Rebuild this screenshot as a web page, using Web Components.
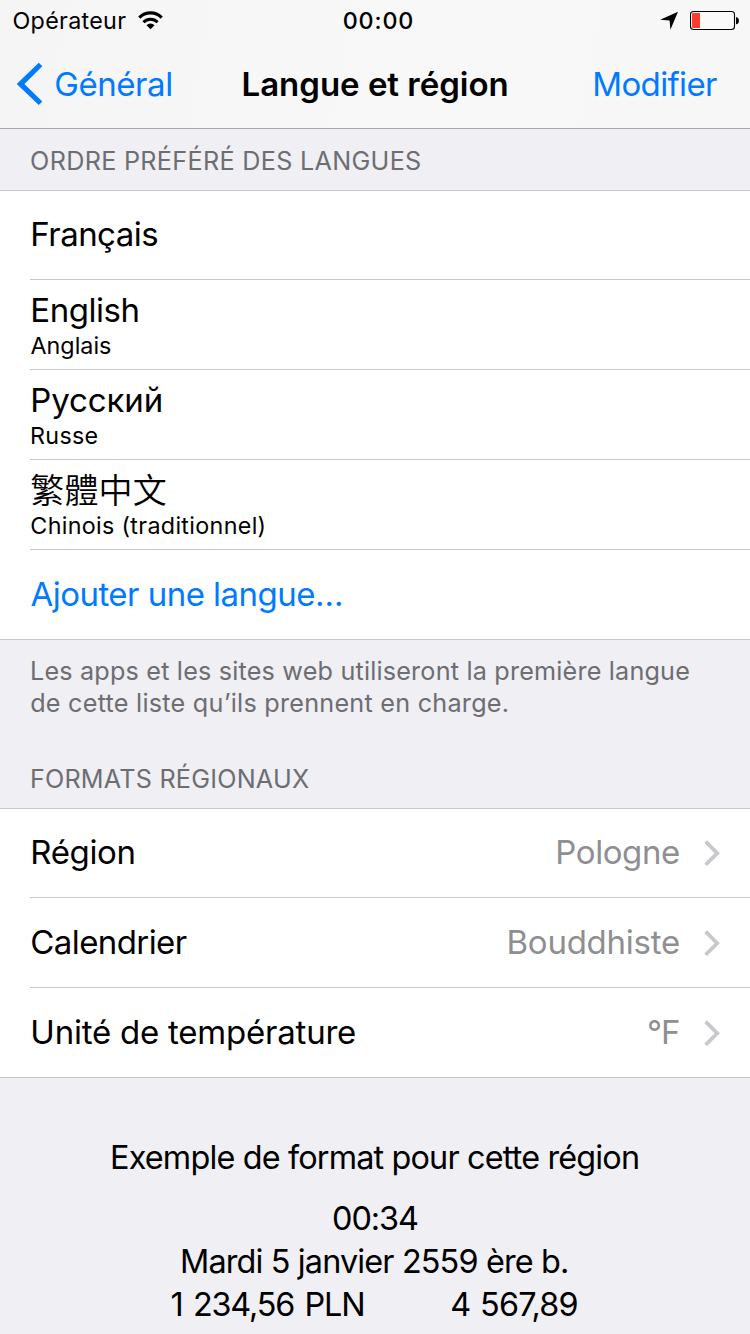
<!DOCTYPE html>
<html lang="fr">
<head>
<meta charset="utf-8">
<title>Langue et région</title>
<style>
  html, body { margin: 0; padding: 0; }
  body { background: #efeff4; font-family: Inter, "Noto Sans CJK TC", sans-serif; color: #000; overflow: hidden; }
</style>
</head>
<body>
<settings-screen></settings-screen>

<template id="t-label">
  <style>
    :host { display: block; flex: none; white-space: nowrap; font-size: 33px; line-height: 40px; height: 40px; }
    :host([kind="sub"]) { font-size: 23.3px; line-height: 31px; height: 31px; }
    :host([kind="note"]) { font-size: 25.2px; line-height: 32px; height: 32px; color: #6d6d72; }
    :host([strong]) { font-weight: 600; }
    :host([medium]) { font-weight: 500; }
    span { display: inline-block; vertical-align: top; height: 100%; }
  </style>
  <span><slot></slot></span>
</template>

<template id="t-status">
  <style>
    :host { display: grid; grid-template-columns: 1fr auto 1fr; height: 40px; padding: 0 11px 0 13px; box-sizing: border-box; }
    .side { display: flex; }
    .left { gap: 11.5px; }
    .right { justify-content: flex-end; gap: 12px; }
    label-text { margin-top: 5px; }
    .time { margin-left: 4px; }
    svg { display: block; }
  </style>
  <div class="side left">
    <label-text kind="sub" inset=".5" ink="112.7">Opérateur</label-text>
    <svg width="25" height="40" viewBox="138 0 25 40">
      <g fill="none" stroke="#000">
        <path stroke-width="3.2" d="M139.3 17.6A15.8 15.8 0 0 1 161.7 17.6"/>
        <path stroke-width="3" d="M143.4 22.2A10 10 0 0 1 157.6 22.2"/>
      </g>
      <path d="M146.5 25.2A5.6 5.6 0 0 1 154.5 25.2L150.5 29.2Z"/>
    </svg>
  </div>
  <label-text class="time" kind="sub" medium ink="68.6">00:00</label-text>
  <div class="side right">
    <svg width="18" height="40" viewBox="660 0 18 40"><path d="M678 11.8L670.4 29.8L669.6 20.4L660.2 19.8Z"/></svg>
    <svg width="49" height="40" viewBox="690 0 49 40">
      <rect x="690.5" y="11.5" width="44" height="18" rx="3" fill="#fff" fill-opacity=".4" stroke="#000" stroke-width="1.1"/>
      <path fill="#ff3b30" d="M693 13H700V28H693A1 1 0 0 1 692 27V14A1 1 0 0 1 693 13Z"/>
      <path d="M736 17A3.5 3.7 0 0 1 736 24.3Z"/>
    </svg>
  </div>
</template>

<template id="t-nav">
  <style>
    :host { display: grid; grid-template-columns: 1fr auto 1fr; height: 88px; padding: 0 33px 0 16px; box-sizing: border-box; }
    .back { display: flex; gap: 12.2px; }
    .back, .edit { color: #007aff; }
    .edit { display: flex; justify-content: flex-end; }
    label-text { margin-top: 24px; }
    .title { margin-left: 17px; }
    svg { display: block; fill: currentColor; }
  </style>
  <div class="back">
    <svg width="27" height="88" viewBox="16 40 27 88"><path d="M38.8 62.7L42.3 66.2L24.4 83.9L42.3 101.6L38.8 105.1L16.7 83.9Z"/></svg>
    <label-text ink="116">Général</label-text>
  </div>
  <label-text class="title" strong ink="263">Langue et région</label-text>
  <div class="edit"><label-text ink="122.7">Modifier</label-text></div>
</template>

<template id="t-group">
  <style>
    :host { display: block; background: #fff; border-bottom: 1px solid #c8c7cc; border-top: 1px solid #c8c7cc; }
  </style>
  <slot></slot>
</template>

<template id="t-row">
  <style>
    :host { display: block; padding-left: 30px; height: 90px; box-sizing: border-box; }
    :host(:first-child) { height: 89px; }
    :host(:last-child) { height: 89px; }
    .in { display: flex; justify-content: space-between; height: 100%; box-sizing: border-box; padding: 24px 30px 0 1.3px; border-bottom: 1px solid #c8c7cc; }
    :host(:first-child) .in { padding-top: 23px; }
    :host(:last-child) .in { border-bottom: 0; }
    :host([double]) .in { padding-top: 10px; }
    :host([action]) { color: #007aff; }
    .end { display: flex; gap: 25px; color: #8e8e93; }
    svg { display: none; margin-top: 8px; }
    :host([link]) svg { display: block; }
  </style>
  <div class="in">
    <div><slot></slot></div>
    <div class="end">
      <slot name="value"></slot>
      <svg width="16" height="26" viewBox="704 840 16 26"><path fill="#c7c7cc" d="M707 840.3L719.9 853.2L707 866L704.3 863.4L714.6 853.2L704.3 843Z"/></svg>
    </div>
  </div>
</template>

<template id="t-sample">
  <style>
    :host { display: flex; flex-direction: column; align-items: center; padding-top: 60px; }
    label-text { font-size: 32.4px; }
    .head { margin-bottom: 21px; }
    .line { margin-bottom: 3px; }
    .nums { display: flex; gap: 88px; margin-right: 1px; }
  </style>
  <label-text class="head" ink="525.8">Exemple de format pour cette région</label-text>
  <label-text class="line" inset="1" ink="85">00:34</label-text>
  <label-text class="line" inset="-1" ink="385">Mardi 5 janvier 2559 ère b.</label-text>
  <div class="nums">
    <label-text ink="191.8" word="2.5">1 234,56 PLN</label-text>
    <label-text ink="126.3" word="1.5">4 567,89</label-text>
  </div>
</template>

<template id="t-screen">
  <style>
    :host { display: block; width: 750px; height: 1334px; overflow: hidden; background: #efeff4; }
    header { background: linear-gradient(100deg, #f5f5f5, #f8f8f8 55%, #f7f7f8); border-bottom: 1px solid #a7a7ab; }
    .caption { padding: 16px 0 13px 31.1px; }
    .foot { padding: 15px 0 0 31.2px; }
    .second { padding-top: 44px; }
    .cjk { font-size: 34px; line-height: 42px; font-weight: 350; }
  </style>
  <header><status-bar></status-bar><nav-bar></nav-bar></header>
  <div class="caption"><label-text kind="note" ink="389">ORDRE PRÉFÉRÉ DES LANGUES</label-text></div>
  <list-group>
    <list-row><label-text inset="1" ink="124.9">Français</label-text></list-row>
    <list-row double><label-text inset="1" ink="105.2">English</label-text><label-text kind="sub" inset="-.8" ink="80.6">Anglais</label-text></list-row>
    <list-row double><label-text inset="1" ink="128.4">Русский</label-text><label-text kind="sub" inset=".8" ink="65.5">Russe</label-text></list-row>
    <list-row double><label-text class="cjk" lang="zh-Hant" ink="134.4">繁體中文</label-text><label-text kind="sub" ink="233.3">Chinois (traditionnel)</label-text></list-row>
    <list-row action><label-text inset="-.8" ink="310.4">Ajouter une langue…</label-text></list-row>
  </list-group>
  <div class="foot">
    <label-text kind="note" inset=".8" ink="657.2">Les apps et les sites web utiliseront la première langue</label-text>
    <label-text kind="note" ink="476.6">de cette liste qu’ils prennent en charge.</label-text>
  </div>
  <div class="caption second"><label-text kind="note" inset=".8" ink="277">FORMATS RÉGIONAUX</label-text></div>
  <list-group>
    <list-row link><label-text inset="1" ink="101.2">Région</label-text><label-text slot="value" ink="121.7">Pologne</label-text></list-row>
    <list-row link><label-text ink="155.4">Calendrier</label-text><label-text slot="value" ink="170.5">Bouddhiste</label-text></list-row>
    <list-row link><label-text inset="1" ink="322.8">Unité de température</label-text><label-text slot="value" ink="30">°F</label-text></list-row>
  </list-group>
  <format-sample></format-sample>
</template>

<script>
  function define(name, templateId, Base = class extends HTMLElement {}) {
    customElements.define(name, class extends Base {
      constructor() {
        super();
        this.attachShadow({ mode: 'open' })
          .append(document.getElementById(templateId).content.cloneNode(true));
      }
    });
  }

  const pen = document.createElement('canvas').getContext('2d');

  /* A line of text tracked so that its ink spans exactly `ink` pixels;
     the side bearings of the first and last glyph hang outside the box.
     `word` widens each space by that many pixels. */
  class FittedLine extends HTMLElement {
    connectedCallback() {
      const span = this.shadowRoot.querySelector('span');
      const text = this.textContent;
      const cs = getComputedStyle(this);
      const ink = parseFloat(this.getAttribute('ink'));
      const word = parseFloat(this.getAttribute('word') || 0);
      pen.font = `${cs.fontWeight} ${cs.fontSize} ${cs.fontFamily}`;
      const m = pen.measureText(text);
      const spaces = text.split(' ').length - 1;
      const natural = m.actualBoundingBoxRight + m.actualBoundingBoxLeft + word * spaces;
      const tracking = (ink - natural) / (text.length - 1);
      span.style.letterSpacing = tracking.toFixed(3) + 'px';
      span.style.wordSpacing = word + 'px';
      span.style.marginLeft = m.actualBoundingBoxLeft.toFixed(2) + 'px';
      this.style.width = ink + 'px';
      if (this.hasAttribute('inset')) this.style.marginLeft = this.getAttribute('inset') + 'px';
    }
  }

  define('label-text', 't-label', FittedLine);
  define('status-bar', 't-status');
  define('nav-bar', 't-nav');
  define('list-group', 't-group');
  define('list-row', 't-row');
  define('format-sample', 't-sample');
  define('settings-screen', 't-screen');
</script>
</body>
</html>
